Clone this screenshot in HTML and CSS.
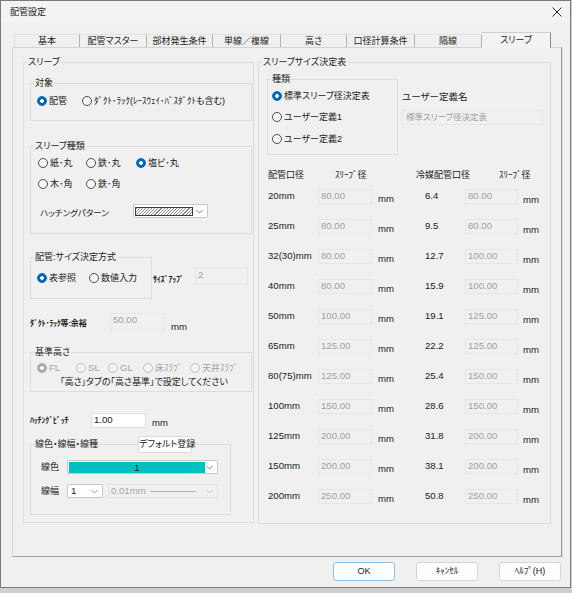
FILE: index.html
```html
<!DOCTYPE html>
<html lang="ja">
<head>
<meta charset="utf-8">
<title>配管設定</title>
<link rel="stylesheet" href="styles.css">
</head>
<body>
<div class="dialog">
  <div class="titlebar">
    <span class="title">配管設定</span>
    <svg class="close" width="10" height="10" viewBox="0 0 10 10"><path d="M0.5 0.5L9.5 9.5M9.5 0.5L0.5 9.5" stroke="#2a2a2a" stroke-width="1"/></svg>
  </div>

  <div class="tabs">
    <div class="tab">基本</div>
    <div class="tab">配管マスター</div>
    <div class="tab">部材発生条件</div>
    <div class="tab">単線／複線</div>
    <div class="tab">高さ</div>
    <div class="tab">口径計算条件</div>
    <div class="tab">隔線</div>
    <div class="tab sel">スリーブ</div>
  </div>

  <div class="panel">
    <div class="group gleft">
      <span class="legend">スリーブ</span>

      <div class="group g-target">
        <span class="legend">対象</span>
        <div class="radios r-target">
          <label class="radio on"><i></i>配管</label>
          <label class="radio"><i></i>ﾀﾞｸﾄ･ﾗｯｸ(ﾚｰｽｳｪｲ･ﾊﾞｽﾀﾞｸﾄも含む)</label>
        </div>
      </div>

      <div class="group g-kind">
        <span class="legend">スリーブ種類</span>
        <div class="radios r-kind">
          <label class="radio"><i></i>紙･丸</label>
          <label class="radio"><i></i>鉄･丸</label>
          <label class="radio on"><i></i>塩ビ･丸</label>
        </div>
        <div class="radios r-kind r-kind2">
          <label class="radio"><i></i>木･角</label>
          <label class="radio"><i></i>鉄･角</label>
        </div>
        <div class="hatch-row">
          <span class="hatch-label">ハッチングパターン</span>
          <div class="combo hatch-combo">
            <span class="hatch"></span>
            <svg class="chev" width="7" height="5" viewBox="0 0 7 5"><path d="M0.5 1L3.5 4L6.5 1" fill="none" stroke="#707070" stroke-width="0.9"/></svg>
          </div>
        </div>
      </div>

      <div class="size-row">
        <div class="group g-size">
          <span class="legend">配管:サイズ決定方式</span>
          <div class="radios r-size">
            <label class="radio on"><i></i>表参照</label>
            <label class="radio"><i></i>数値入力</label>
          </div>
        </div>
        <span class="sizeup-label">ｻｲｽﾞｱｯﾌﾟ</span>
        <span class="input dis sizeup-input lat">2</span>
      </div>

      <div class="margin-row">
        <span class="margin-label">ﾀﾞｸﾄ･ﾗｯｸ等:余裕</span>
        <span class="input dis margin-input lat">50.00</span>
        <span class="unit lat margin-unit">mm</span>
      </div>

      <div class="group g-height">
        <span class="legend">基準高さ</span>
        <div class="radios r-height">
          <label class="radio dis on"><i></i><span class="lat">FL</span></label>
          <label class="radio dis"><i></i><span class="lat">SL</span></label>
          <label class="radio dis"><i></i><span class="lat">GL</span></label>
          <label class="radio dis"><i></i>床ｽﾗﾌﾞ</label>
          <label class="radio dis"><i></i>天井ｽﾗﾌﾞ</label>
        </div>
        <div class="height-note">「高さ」タブの「高さ基準」で設定してください</div>
      </div>

      <div class="pitch-row">
        <span class="pitch-label">ﾊｯﾁﾝｸﾞﾋﾟｯﾁ</span>
        <span class="input pitch-input lat">1.00</span>
        <span class="unit lat pitch-unit">mm</span>
      </div>

      <div class="group g-line">
        <span class="legend">線色・線幅・線種</span>
        <button class="btn default-btn">デフォルト登録</button>
        <div class="line-row">
          <span class="line-label">線色</span>
          <div class="combo color-combo">
            <span class="swatch lat">1</span>
            <svg class="chev" width="7" height="5" viewBox="0 0 7 5"><path d="M0.5 1L3.5 4L6.5 1" fill="none" stroke="#707070" stroke-width="0.9"/></svg>
          </div>
        </div>
        <div class="line-row line-row2">
          <span class="line-label">線幅</span>
          <div class="combo width-combo">
            <span class="lat">1</span>
            <svg class="chev" width="7" height="5" viewBox="0 0 7 5"><path d="M0.5 1L3.5 4L6.5 1" fill="none" stroke="#8a8a8a" stroke-width="0.9"/></svg>
          </div>
          <div class="combo dis type-combo">
            <span class="lat">0.01mm</span>
            <span class="type-line"></span>
            <svg class="chev" width="7" height="5" viewBox="0 0 7 5"><path d="M0.5 1L3.5 4L6.5 1" fill="none" stroke="#c0c0c0" stroke-width="0.9"/></svg>
          </div>
        </div>
      </div>
    </div>

    <div class="group gright">
      <span class="legend">スリーブサイズ決定表</span>
      <div class="top-row">
        <div class="group g-type">
          <span class="legend">種類</span>
          <label class="radio on"><i></i>標準スリーブ径決定表</label>
          <label class="radio"><i></i>ユーザー定義1</label>
          <label class="radio r3"><i></i>ユーザー定義2</label>
        </div>
        <div class="user-col">
          <span class="user-label">ユーザー定義名</span>
          <span class="input dis user-input">標準スリーブ径決定表</span>
        </div>
      </div>

      <div class="table-head">
        <span>配管口径</span>
        <span>ｽﾘｰﾌﾞ径</span>
        <span>冷媒配管口径</span>
        <span>ｽﾘｰﾌﾞ径</span>
      </div>

      <div class="table">
        <div class="trow"><span class="c-label">20mm</span><span class="input dis">80.00</span><span class="c-unit">mm</span><span class="c-label">6.4</span><span class="input dis">80.00</span><span class="c-unit c-unit2">mm</span></div>
        <div class="trow"><span class="c-label">25mm</span><span class="input dis">80.00</span><span class="c-unit">mm</span><span class="c-label">9.5</span><span class="input dis">80.00</span><span class="c-unit c-unit2">mm</span></div>
        <div class="trow"><span class="c-label">32(30)mm</span><span class="input dis">80.00</span><span class="c-unit">mm</span><span class="c-label">12.7</span><span class="input dis">100.00</span><span class="c-unit c-unit2">mm</span></div>
        <div class="trow"><span class="c-label">40mm</span><span class="input dis">80.00</span><span class="c-unit">mm</span><span class="c-label">15.9</span><span class="input dis">100.00</span><span class="c-unit c-unit2">mm</span></div>
        <div class="trow"><span class="c-label">50mm</span><span class="input dis">100.00</span><span class="c-unit">mm</span><span class="c-label">19.1</span><span class="input dis">125.00</span><span class="c-unit c-unit2">mm</span></div>
        <div class="trow"><span class="c-label">65mm</span><span class="input dis">125.00</span><span class="c-unit">mm</span><span class="c-label">22.2</span><span class="input dis">125.00</span><span class="c-unit c-unit2">mm</span></div>
        <div class="trow"><span class="c-label">80(75)mm</span><span class="input dis">125.00</span><span class="c-unit">mm</span><span class="c-label">25.4</span><span class="input dis">150.00</span><span class="c-unit c-unit2">mm</span></div>
        <div class="trow"><span class="c-label">100mm</span><span class="input dis">150.00</span><span class="c-unit">mm</span><span class="c-label">28.6</span><span class="input dis">150.00</span><span class="c-unit c-unit2">mm</span></div>
        <div class="trow"><span class="c-label">125mm</span><span class="input dis">200.00</span><span class="c-unit">mm</span><span class="c-label">31.8</span><span class="input dis">200.00</span><span class="c-unit c-unit2">mm</span></div>
        <div class="trow"><span class="c-label">150mm</span><span class="input dis">200.00</span><span class="c-unit">mm</span><span class="c-label">38.1</span><span class="input dis">200.00</span><span class="c-unit c-unit2">mm</span></div>
        <div class="trow"><span class="c-label">200mm</span><span class="input dis">250.00</span><span class="c-unit">mm</span><span class="c-label">50.8</span><span class="input dis">250.00</span><span class="c-unit c-unit2">mm</span></div>
      </div>
    </div>
  </div>

  <div class="buttons">
    <button class="btn dlg-btn ok lat">OK</button>
    <button class="btn dlg-btn">ｷｬﾝｾﾙ</button>
    <button class="btn dlg-btn">ﾍﾙﾌﾟ<span class="lat">(H)</span></button>
  </div>
</div>
</body>
</html>
```

FILE: styles.css
```css
* { box-sizing: border-box; }

html, body {
  margin: 0;
  padding: 0;
}

body {
  width: 572px;
  height: 593px;
  background: #cfcfcf;
  font-family: "Liberation Sans", "Noto Sans CJK JP", sans-serif;
  font-size: 9px;
  line-height: 12px;
  color: #1b1b1b;
  font-feature-settings: "palt";
  overflow: hidden;
}

.lat {
  font-family: "Liberation Sans", sans-serif;
  font-size: 9.6px;
}

.dialog {
  width: 571px;
  height: 588px;
  background: #f0f0f0;
  border: 1px solid #7a7a7a;
  display: flex;
  flex-direction: column;
}

/* title bar */
.titlebar {
  height: 21px;
  background: #f3f3f3;
  display: flex;
  align-items: center;
  justify-content: space-between;
  padding: 0 8px 0 9px;
}
.title { font-size: 9px; }
.close { display: block; }

/* tabs */
.tabs {
  margin: 10px 0 0 13px;
  height: 15px;
  display: grid;
  grid-template-columns: 66px 67px 66px 68px 66px 68px 67px 69px;
  align-items: end;
  position: relative;
  z-index: 1;
}
.tab {
  height: 13px;
  line-height: 12px;
  text-align: center;
  border-top: 1px solid #e2e2e2;
  border-right: 1px solid #b4b4b4;
  background: #f0f0f0;
}
.tab:first-child { border-left: 1px solid #d8d8d8; }
.tab.sel {
  height: 16px;
  margin-bottom: -1px;
  line-height: 15px;
  border-top: 1px solid #cfcfcf;
  border-right: 1px solid #8c8c8c;
  background: #f3f3f3;
}

/* panel */
.panel {
  margin-left: 11px;
  width: 550px;
  height: 510px;
  border: 1px solid #d4d4d4;
  border-right-color: #9a9a9a;
  border-bottom-color: #a0a0a0;
  box-shadow: 1px 0 0 #dadada;
  padding: 14px 0 0 10px;
  display: flex;
  align-items: flex-start;
}

/* group box */
.group {
  position: relative;
  border: 1px solid #dcdcdc;
}
.legend {
  position: absolute;
  top: -7px;
  left: 3px;
  padding: 0 1px;
  background: #f0f0f0;
  line-height: 12px;
  white-space: nowrap;
}

/* radios */
.radio {
  display: flex;
  align-items: center;
  height: 12px;
  white-space: nowrap;
}
.radio i {
  flex: none;
  width: 10px;
  height: 10px;
  border: 1px solid #4e4e4e;
  border-radius: 50%;
  background: #f7f7f7;
  margin-right: 2px;
}
.radio.on i {
  border-color: #0067c0;
  background: radial-gradient(circle, #ffffff 0 1.6px, #0067c0 2.2px);
}
.radio.dis { color: #a3a3a3; }
.radio.dis i { border-color: #c2c2c2; background: #f3f3f3; }
.radio.dis.on i {
  border-color: #a8a8a8;
  background: radial-gradient(circle, #ffffff 0 1.6px, #a8a8a8 2.2px);
}
.radios { display: grid; }

/* left group */
.gleft {
  width: 231px;
  height: 461px;
  padding: 0 1px 0 6px;
}

.g-target {
  margin-top: 20px;
  width: 222px;
  height: 38px;
  padding: 11px 0 0 6px;
}
.r-target { grid-template-columns: 45px auto; }

.g-kind {
  margin-top: 25px;
  width: 222px;
  height: 88px;
  padding: 10px 0 0 7px;
}
.r-kind { grid-template-columns: 48px 50px auto; }
.r-kind2 { margin-top: 9px; }

.hatch-row {
  margin-top: 14px;
  display: flex;
  align-items: flex-start;
}
.hatch-label {
  width: 95px;
  padding: 3px 0 0 2px;
  font-size: 8.5px;
}
.combo {
  display: flex;
  align-items: center;
  justify-content: space-between;
  background: #ffffff;
  border: 1px solid #c9c9c9;
  border-radius: 1px;
}
.chev { display: block; flex: none; }
.hatch-combo {
  width: 75px;
  height: 14px;
  padding: 0 4px 0 1px;
}
.hatch {
  width: 58px;
  height: 9px;
  border: 1px solid #3a3a3a;
  background: repeating-linear-gradient(135deg, #8a8a8a 0 0.8px, #ffffff 0.8px 2.2px);
}

.size-row {
  margin-top: 23px;
  height: 42px;
  display: flex;
  align-items: flex-start;
}
.g-size {
  width: 122px;
  height: 42px;
  padding: 14px 0 0 6px;
}
.r-size { grid-template-columns: 52px auto; }
.sizeup-label {
  width: 42px;
  margin: 17px 0 0 1px;
  font-size: 8px;
  font-weight: bold;
  letter-spacing: -0.2px;
}
.sizeup-input {
  margin-top: 11px;
  width: 53px;
  height: 16px;
}

.input {
  display: block;
  background: #ffffff;
  border: 1px solid #e0e0e0;
  padding: 0 0 0 2px;
  line-height: 12px;
  white-space: nowrap;
  overflow: hidden;
}
.input.dis {
  background: #f0f0f0;
  border-color: #e6e6e6;
  color: #a0a0a0;
}

.margin-row {
  margin-top: 14px;
  height: 17px;
  display: flex;
  align-items: flex-start;
}
.margin-label {
  width: 80px;
  padding-top: 5px;
  font-size: 8px;
  font-weight: bold;
  letter-spacing: -0.2px;
}
.margin-input { width: 55px; height: 17px; }
.unit { display: block; }
.margin-unit { margin: 8px 0 0 6px; }

.g-height {
  margin-top: 22px;
  width: 222px;
  height: 40px;
  padding: 9px 0 0 6px;
}
.r-height { grid-template-columns: 39px 32px 35px 47px auto; }
.height-note {
  margin: 2px 0 0 23px;
  white-space: nowrap;
}

.pitch-row {
  margin-top: 21px;
  height: 15px;
  display: flex;
  align-items: flex-start;
}
.pitch-label {
  width: 61px;
  padding-top: 2px;
  font-size: 8px;
  font-weight: bold;
  letter-spacing: -0.2px;
}
.pitch-input { width: 55px; height: 15px; color: #1b1b1b; }
.pitch-unit { margin: 4px 0 0 6px; }

.g-line {
  margin-top: 16px;
  width: 201px;
  height: 71px;
  padding: 15px 0 0 10px;
}
.btn {
  font: inherit;
  color: #1b1b1b;
  background: #fdfdfd;
  border: 1px solid #dcdcdc;
  border-radius: 3px;
  padding: 0;
  margin: 0;
}
.default-btn {
  position: absolute;
  left: 107px;
  top: -9px;
  width: 54px;
  height: 17px;
  line-height: 15px;
  white-space: nowrap;
  background: #ffffff;
  border-color: #d9d9d9;
}
.line-row {
  display: flex;
  align-items: center;
  height: 14px;
}
.line-row2 { margin-top: 10px; }
.line-label { width: 26px; }
.color-combo {
  width: 151px;
  height: 14px;
  padding: 1px 4px 1px 1px;
}
.swatch {
  width: 136px;
  height: 11px;
  background: #00c0c0;
  text-align: center;
  line-height: 11px;
}
.width-combo {
  width: 36px;
  height: 14px;
  padding: 0 4px 0 3px;
}
.type-combo {
  margin-left: 5px;
  width: 110px;
  height: 14px;
  padding: 0 4px 0 2px;
}
.combo.dis {
  background: #f0f0f0;
  border-color: #e2e2e2;
  color: #a6a6a6;
}
.type-line {
  flex: 1;
  height: 1px;
  margin: 0 10px 0 4px;
  background: #b0b0b0;
}

/* right group */
.gright {
  margin-left: 4px;
  width: 293px;
  height: 462px;
  padding: 0 0 0 8px;
}
.top-row {
  margin-top: 16px;
  display: flex;
  align-items: flex-start;
}
.g-type {
  width: 131px;
  height: 76px;
  padding: 10px 0 0 4px;
}
.g-type .radio + .radio { margin-top: 9px; }
.g-type .r3 { margin-top: 10px !important; }
.user-col {
  margin-left: 4px;
  display: flex;
  flex-direction: column;
}
.user-label {
  margin-top: 12px;
  font-size: 9.5px;
}
.user-input {
  margin-top: 7px;
  width: 141px;
  height: 15px;
  font-size: 8.5px;
  padding-left: 3px;
}

.table-head {
  margin: 14px 0 0 1px;
  display: grid;
  grid-template-columns: 67px 81px 83px auto;
  height: 12px;
}
.table {
  margin: 8px 0 0 1px;
}
.trow {
  display: grid;
  grid-template-columns: 50px 54px 53px 40px 53px auto;
  height: 30px;
  align-items: start;
  font-family: "Liberation Sans", sans-serif;
  font-size: 9.6px;
}
.c-label { padding-top: 1px; }
.trow .input { height: 15px; line-height: 11px; padding-left: 2px; }
.c-unit { padding: 4px 0 0 6px; }
.c-unit2 { padding-left: 5px; padding-top: 5px; }

/* buttons */
.buttons {
  margin-top: 5px;
  padding-right: 9px;
  display: flex;
  justify-content: flex-end;
  gap: 21px;
}
.dlg-btn {
  width: 62px;
  height: 19px;
  line-height: 17px;
  text-align: center;
  border-color: #d6d6d6;
}
.dlg-btn .lat { font-size: 9px; }
.dlg-btn.ok {
  border-color: #8fbde8;
  font-size: 9px;
}
```
